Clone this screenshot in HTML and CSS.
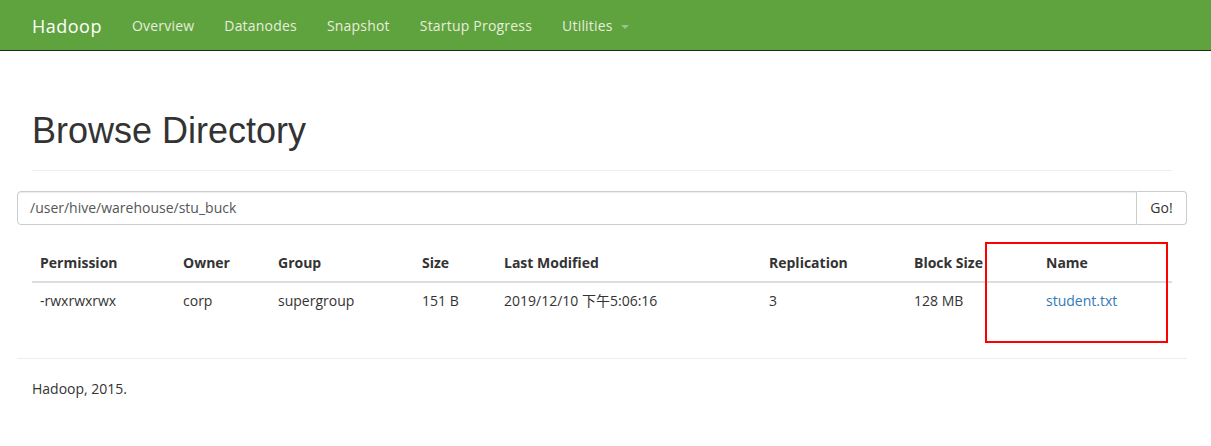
FILE: index.html
```html
<!DOCTYPE html>
<html lang="en">
<head>
    <meta charset="UTF-8">
    <title>Browsing HDFS</title>
    <link rel="stylesheet" href="styles.css">
</head>
<body>
    <header class="navbar">
        <div class="navbar-inner">
            <a class="brand" href="#">Hadoop</a>
            <ul class="nav">
                <li><a href="#">Overview</a></li>
                <li><a href="#">Datanodes</a></li>
                <li><a href="#">Snapshot</a></li>
                <li><a href="#">Startup Progress</a></li>
                <li><a href="#">Utilities <span class="caret"></span></a></li>
            </ul>
        </div>
    </header>

    <div class="container">
        <div class="page-header">
            <h1>Browse Directory</h1>
        </div>

        <form class="input-group" onsubmit="return false;">
            <input type="text" class="form-control" value="/user/hive/warehouse/stu_buck">
            <button type="submit" class="btn">Go!</button>
        </form>

        <div class="table-wrap">
            <table class="table">
                <colgroup>
                    <col class="c-perm">
                    <col class="c-owner">
                    <col class="c-group">
                    <col class="c-size">
                    <col class="c-mod">
                    <col class="c-repl">
                    <col class="c-block">
                    <col class="c-name">
                </colgroup>
                <thead>
                    <tr>
                        <th>Permission</th>
                        <th>Owner</th>
                        <th>Group</th>
                        <th>Size</th>
                        <th>Last Modified</th>
                        <th>Replication</th>
                        <th>Block Size</th>
                        <th>Name</th>
                    </tr>
                </thead>
                <tbody>
                    <tr>
                        <td>-rwxrwxrwx</td>
                        <td>corp</td>
                        <td>supergroup</td>
                        <td>151 B</td>
                        <td>2019/12/10 下午5:06:16</td>
                        <td>3</td>
                        <td>128 MB</td>
                        <td><a href="#">student.txt</a></td>
                    </tr>
                </tbody>
            </table>
            <div class="highlight"></div>
        </div>

        <hr class="footer-rule">
        <p class="footer">Hadoop, 2015.</p>
    </div>
</body>
</html>
```

FILE: styles.css
```css
* {
    box-sizing: border-box;
}

body {
    margin: 0;
    font-family: "Open Sans", "Noto Sans CJK SC", sans-serif;
    font-size: 14px;
    line-height: 20px;
    color: #333;
    background: #fff;
}

a {
    color: #337ab7;
    text-decoration: none;
}

/* navbar */
.navbar {
    background-color: #5fa33e;
    height: 51px;
    border-bottom: 1px solid #1e2a18;
}

.navbar-inner {
    display: flex;
    align-items: center;
    height: 50px;
    padding-left: 17px;
}

.brand {
    color: #fff;
    font-size: 18px;
    letter-spacing: 0.5px;
    padding: 16px 15px 14px;
    line-height: 20px;
}

.nav {
    display: flex;
    list-style: none;
    margin: 0;
    padding: 0;
}

.nav a {
    display: block;
    padding: 16px 15px 14px;
    color: #e8eddc;
    letter-spacing: 0.2px;
}

.caret {
    display: inline-block;
    width: 0;
    height: 0;
    margin-left: 4px;
    vertical-align: middle;
    border-top: 4px solid #9fbf90;
    border-left: 4px solid transparent;
    border-right: 4px solid transparent;
}

/* main */
.container {
    width: 1170px;
    margin-left: 17px;
    padding: 0 15px;
}

.page-header {
    margin-top: 60px;
    padding-bottom: 9px;
    border-bottom: 1px solid #eee;
}

.page-header h1 {
    margin: 0 0 10px;
    font-family: "Liberation Sans", Arial, sans-serif;
    font-size: 36px;
    font-weight: 500;
    line-height: 1.1;
}

.input-group {
    display: flex;
    margin: 20px -15px 0;
    height: 34px;
}

.form-control {
    flex: 1;
    height: 34px;
    padding: 6px 12px;
    font: inherit;
    color: #555;
    border: 1px solid #ccc;
    border-radius: 4px 0 0 4px;
    box-shadow: inset 0 1px 1px rgba(0, 0, 0, 0.075);
}

.btn {
    width: 50px;
    height: 34px;
    padding: 6px 12px;
    font: inherit;
    color: #333;
    background: #fff;
    border: 1px solid #ccc;
    border-left: 0;
    border-radius: 0 4px 4px 0;
}

.table-wrap {
    position: relative;
}

.table {
    width: 100%;
    margin: 20px 0;
    border-collapse: collapse;
    table-layout: fixed;
}

.c-perm { width: 143px; }
.c-owner { width: 95px; }
.c-group { width: 144px; }
.c-size { width: 82px; }
.c-mod { width: 265px; }
.c-repl { width: 145px; }
.c-block { width: 132px; }
.c-name { width: 134px; }

.table th,
.table td {
    padding: 8px;
    text-align: left;
    vertical-align: top;
    white-space: nowrap;
}

.table th {
    font-weight: 700;
    border-bottom: 2px solid #ddd;
}

.table td {
    border-top: 1px solid #ddd;
}

/* red annotation box over the Name column */
.highlight {
    position: absolute;
    left: 953px;
    top: -3px;
    width: 183px;
    height: 101px;
    border: 2px solid #f00;
}

.footer-rule {
    margin: 39px -15px 20px;
    border: 0;
    border-top: 1px solid #eee;
}

.footer {
    margin: 0;
}
```
